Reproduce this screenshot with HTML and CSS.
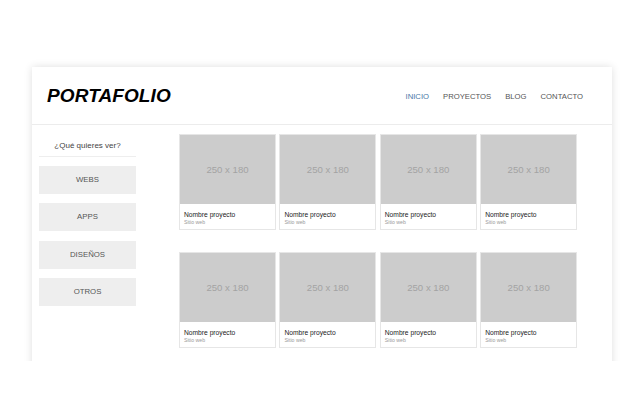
FILE: index.html
```html
<!DOCTYPE html>
<html lang="es">
<head>
<meta charset="utf-8">
<title>Portafolio</title>
<link rel="stylesheet" href="styles.css">
</head>
<body>
<div class="viewport">
  <div class="page">
    <header class="header">
      <h1 class="logo">PORTAFOLIO</h1>
      <nav class="nav">
        <a class="nav-link active">INICIO</a>
        <a class="nav-link">PROYECTOS</a>
        <a class="nav-link">BLOG</a>
        <a class="nav-link">CONTACTO</a>
      </nav>
    </header>
    <main class="main">
      <aside class="sidebar">
        <div class="side-title">¿Qué quieres ver?</div>
        <div class="side-btn">WEBS</div>
        <div class="side-btn">APPS</div>
        <div class="side-btn">DISEÑOS</div>
        <div class="side-btn">OTROS</div>
      </aside>
      <section class="grid">
        <div class="card"><div class="thumb">250 x 180</div><div class="cap"><div class="name">Nombre proyecto</div><div class="type">Sitio web</div></div></div>
        <div class="card"><div class="thumb">250 x 180</div><div class="cap"><div class="name">Nombre proyecto</div><div class="type">Sitio web</div></div></div>
        <div class="card"><div class="thumb">250 x 180</div><div class="cap"><div class="name">Nombre proyecto</div><div class="type">Sitio web</div></div></div>
        <div class="card"><div class="thumb">250 x 180</div><div class="cap"><div class="name">Nombre proyecto</div><div class="type">Sitio web</div></div></div>
        <div class="card"><div class="thumb">250 x 180</div><div class="cap"><div class="name">Nombre proyecto</div><div class="type">Sitio web</div></div></div>
        <div class="card"><div class="thumb">250 x 180</div><div class="cap"><div class="name">Nombre proyecto</div><div class="type">Sitio web</div></div></div>
        <div class="card"><div class="thumb">250 x 180</div><div class="cap"><div class="name">Nombre proyecto</div><div class="type">Sitio web</div></div></div>
        <div class="card"><div class="thumb">250 x 180</div><div class="cap"><div class="name">Nombre proyecto</div><div class="type">Sitio web</div></div></div>
      </section>
    </main>
  </div>
</div>
</body>
</html>
```
FILE: styles.css
```css
* { box-sizing: border-box; }
html, body { margin: 0; padding: 0; background: #fff; }
body { font-family: "Liberation Sans", Arial, sans-serif; color: #333; }

.viewport {
  height: 361px;
  overflow: hidden;
  padding-top: 67px;
  padding-left: 32px;
}

.page {
  width: 580px;
  height: 420px;
  background: #fff;
  box-shadow: 0 0 8px rgba(0,0,0,0.13);
}

.header {
  height: 58px;
  border-bottom: 1px solid #ececec;
  display: flex;
  align-items: center;
  justify-content: space-between;
  padding: 0 29px 0 15px;
}

.logo {
  margin: 0;
  font-size: 19px;
  font-weight: bold;
  font-style: italic;
  color: #000;
  letter-spacing: 0.1px;
}

.nav { display: flex; gap: 14px; padding-top: 1px; }
.nav-link { font-size: 7.7px; color: #555; text-decoration: none; }
.nav-link.active { color: #4a78a8; }

.main {
  display: flex;
  padding-left: 7px;
}

.sidebar {
  width: 97px;
  flex: none;
  padding-top: 11px;
  display: flex;
  flex-direction: column;
}

.side-title {
  height: 21px;
  line-height: 20px;
  text-align: center;
  font-size: 8px;
  color: #444;
  border-bottom: 1px solid #eee;
  margin-bottom: 9px;
}

.side-btn {
  height: 28px;
  line-height: 28px;
  background: #eee;
  text-align: center;
  font-size: 7.8px;
  color: #555;
  margin-bottom: 9.4px;
}

.grid {
  margin-left: 43px;
  padding-top: 9px;
  display: grid;
  grid-template-columns: repeat(4, 97px);
  column-gap: 3.4px;
  row-gap: 22px;
  align-content: start;
}

.card {
  border: 1px solid #e6e6e6;
  background: #fff;
}

.thumb {
  height: 69px;
  background: #ccc;
  color: #a3a3a3;
  font-size: 9.6px;
  display: flex;
  align-items: center;
  justify-content: center;
}

.cap {
  height: 25px;
  padding: 6.5px 4px 0;
}

.name { font-size: 6.7px; color: #222; line-height: 8px; }
.type { font-size: 5.2px; color: #999; line-height: 7px; }
```
